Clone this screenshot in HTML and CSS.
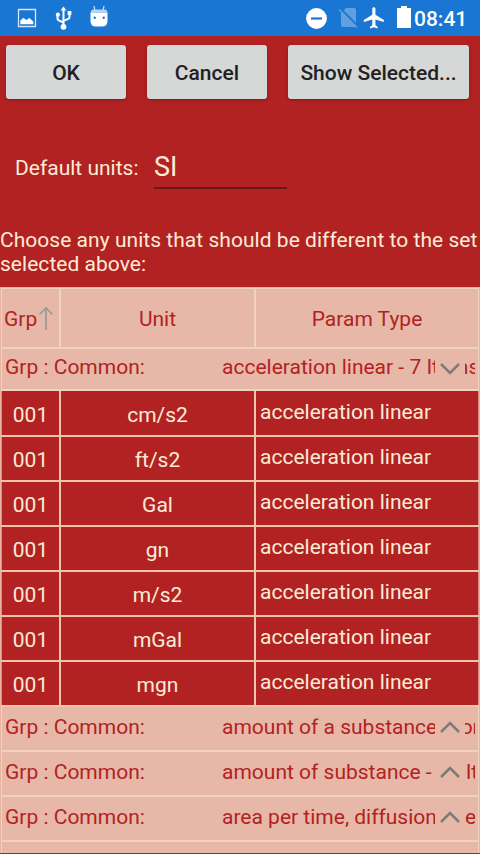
FILE: index.html
```html
<!DOCTYPE html>
<html lang="en">
<head>
<meta charset="utf-8">
<title>Units</title>
<link rel="stylesheet" href="styles.css">
</head>
<body>
<header class="status">
  <svg class="status-left" width="116" height="36" viewBox="0 0 116 36">
    <path d="M18.500 9.500h17v17h-17z" fill="none" stroke="#d9e8f8" stroke-width="1.300"/>
    <path d="M20.300 24.200v-3.400l3-3 3 2.300 3-2 4 3.500v2.600z" fill="#fff"/>
    <g fill="none" stroke="#fff" stroke-width="2"><path d="M63.500 26V9M57.500 15v3.500q0 1.300 1.200 1.800l4.800 2.200M69.500 13v4q0 1.300-1.200 1.800l-4.800 2"/></g>
    <path d="M63.500 6.500l3 4h-6z" fill="#fff"/><circle cx="63.500" cy="26.800" r="2.900" fill="#fff"/><circle cx="57.900" cy="14.700" r="2.100" fill="#fff"/><path d="M67.600 11h3.800v3.900h-3.800z" fill="#fff"/>
    <path d="M94 6l1 5M104 6l-1 5" stroke="#d9e8f8" stroke-width="1.200"/>
    <path d="M90.500 12.500h17V21q0 5.500-5.500 5.500h-6q-5.500 0-5.500-5.500z" fill="#fff"/><path d="M92.500 9.500h13q2 .8 2 3.300h-17q0-2.500 2-3.300z" fill="#b5d3f2"/>
    <circle cx="94.700" cy="17.800" r="1.200" fill="#1976d2"/><circle cx="103.700" cy="17.800" r="1.200" fill="#1976d2"/>
  </svg>
  <svg class="status-right" width="110" height="36" viewBox="302 0 110 36">
    <circle cx="316.500" cy="18.500" r="10.400" fill="#fff"/><path d="M311 18.500h11" stroke="#1976d2" stroke-width="2.200"/>
    <path d="M346 8h8q2 0 2 2v17h-13q-2 0-2-2V13z" fill="#60a0e0"/><path d="M340 8.200l19 19" stroke="#1976d2" stroke-width="2"/><path d="M339 9.500l18 18" stroke="#60a0e0" stroke-width="1.700"/>
    <path transform="translate(361.200 5.200) scale(1.055)" d="M21.500 16v-2l-8-5V3.500c0-.83-.67-1.500-1.500-1.500s-1.500.67-1.500 1.500V9l-8 5v2l8-2.500V19l-2 1.500V22l3.500-1 3.500 1v-1.500l-2-1.500v-5.500l8 2.500z" fill="#fff"/>
    <path d="M401 6h6v2h4v20h-14V8h4z" fill="#fff"/>
  </svg>
  <span class="clock">08:41</span>
</header>
<main>
  <div class="buttons"><button class="btn">OK</button><button class="btn">Cancel</button><button class="btn btn-wide">Show Selected...</button></div>
  <div class="field"><label for="units">Default units:</label><input id="units" class="input" value="SI"></div>
  <p class="hint">Choose any units that should be different to the set selected above:</p>
  <section class="grid">
    <div class="row head"><div class="cell">Grp<svg class="sort" width="16" height="24" viewBox="0 0 16 24"><path d="M8 24V2M1.500 8.500L8 2l6.500 6.500" fill="none" stroke="#999" stroke-width="1.700"/></svg></div><div class="cell">Unit</div><div class="cell">Param Type</div></div>
    <div class="group first"><span class="key">Grp : Common:</span><span class="name">acceleration linear - 7 Items</span><span class="toggle"><svg width="20" height="12" viewBox="0 0 20 12"><path d="M1 1l9 9 9-9"/></svg></span></div>
    <div class="row"><div class="cell">001</div><div class="cell">cm/s2</div><div class="cell type">acceleration linear</div></div>
    <div class="row"><div class="cell">001</div><div class="cell">ft/s2</div><div class="cell type">acceleration linear</div></div>
    <div class="row"><div class="cell">001</div><div class="cell">Gal</div><div class="cell type">acceleration linear</div></div>
    <div class="row"><div class="cell">001</div><div class="cell">gn</div><div class="cell type">acceleration linear</div></div>
    <div class="row"><div class="cell">001</div><div class="cell">m/s2</div><div class="cell type">acceleration linear</div></div>
    <div class="row"><div class="cell">001</div><div class="cell">mGal</div><div class="cell type">acceleration linear</div></div>
    <div class="row"><div class="cell">001</div><div class="cell">mgn</div><div class="cell type">acceleration linear</div></div>
    <div class="group"><span class="key">Grp : Common:</span><span class="name">amount of a substance (concentration)</span><span class="toggle"><svg width="20" height="12" viewBox="0 0 20 12"><path d="M1 11l9-9 9 9"/></svg></span></div>
    <div class="group"><span class="key">Grp : Common:</span><span class="name">amount of substance - 12 Items</span><span class="toggle"><svg width="20" height="12" viewBox="0 0 20 12"><path d="M1 11l9-9 9 9"/></svg></span></div>
    <div class="group"><span class="key">Grp : Common:</span><span class="name">area per time, diffusion coefficient</span><span class="toggle"><svg width="20" height="12" viewBox="0 0 20 12"><path d="M1 11l9-9 9 9"/></svg></span></div>
    <div class="group last"></div>
  </section>
</main>
</body>
</html>
```
FILE: styles.css
```css
* { box-sizing: border-box; }
body { margin: 0; width: 480px; height: 854px; overflow: hidden; background: #b22222; color: #faebd7; font: 21px/24px Roboto, sans-serif; }
.status { height: 36px; display: flex; justify-content: space-between; background: #1976d2; color: #fff; }
.status-right { margin-left: auto; }
.clock { width: 68px; padding: 1px 0 0 2px; line-height: 37px; font-size: 21px; font-weight: 500; }
.buttons { display: flex; gap: 21px; padding: 9px 0 0 6px; }
.btn { width: 120px; height: 54px; padding: 2px 0 0; border: 0; border-radius: 3px; background: #d6d7d7; color: #212121; font: 500 21px/24px Roboto, sans-serif; box-shadow: 0 1px 3px rgba(0, 0, 0, .3); }
.btn-wide { width: 181px; }
.field { display: flex; height: 53px; margin: 37px 0 0 15px; align-items: flex-start; }
.field label { width: 139px; padding-top: 20px; }
.input { width: 133px; height: 53px; padding: 11px 0 0; border: 0; border-bottom: 2px solid #67191b; outline: 0; background: transparent; color: #faebd7; font: 27px/32px Roboto, sans-serif; }
.hint { margin: 39px 0 0; height: 59px; letter-spacing: .035px; }
.grid { height: 566px; overflow: hidden; border: 1px solid #e9b3a1; border-width: 1px 1px 0 1px; background: #b22222; }
.row { display: flex; height: 45px; border-bottom: 2px solid #f0c4ac; }
.cell { display: flex; align-items: center; justify-content: center; width: 195px; padding-top: 2px; border-right: 2px solid #f0c4ac; }
.cell:first-child { width: 60px; border-left: 1px solid #da8d82; }
.cell:last-child { flex: 1; border-right: 1px solid #da8d82; }
.cell.type { justify-content: flex-start; padding: 0 0 4px 4px; }
.head { height: 61px; border-top: 1px solid #f3d9c2; border-color: #f2d2be; background: #e7b8a8; color: #b22222; }
.head .cell { border-color: #f2d2be; }
.head .cell:first-child { justify-content: flex-start; padding-left: 2px; }
.sort { margin: -3px 0 0 1px; flex: none; }
.group { position: relative; display: flex; height: 45px; padding: 8px 3px 0 3px; overflow: hidden; border: 1px solid #f2d2be; border-bottom-width: 2px; border-top: 0; background: #e7b8a8; color: #b22222; }
.first { height: 42px; padding-top: 6px; }
.first + .row { height: 46px; }
.first + .row .cell { padding-top: 3px; }
.first + .row .type { padding: 0 0 3px 4px; }
.key { width: 217px; flex: none; }
.name { width: 253px; flex: none; overflow: hidden; white-space: nowrap; }
.toggle { position: absolute; right: 13px; top: 0; display: flex; width: 30px; height: 42px; justify-content: center; padding-top: 14px; background: #e7b8a8; }
.first .toggle { height: 40px; padding-top: 14px; }
.toggle path { fill: none; stroke: #7b7b78; stroke-width: 2.500; }
.last { height: 11px; border-bottom: 0; }
```
